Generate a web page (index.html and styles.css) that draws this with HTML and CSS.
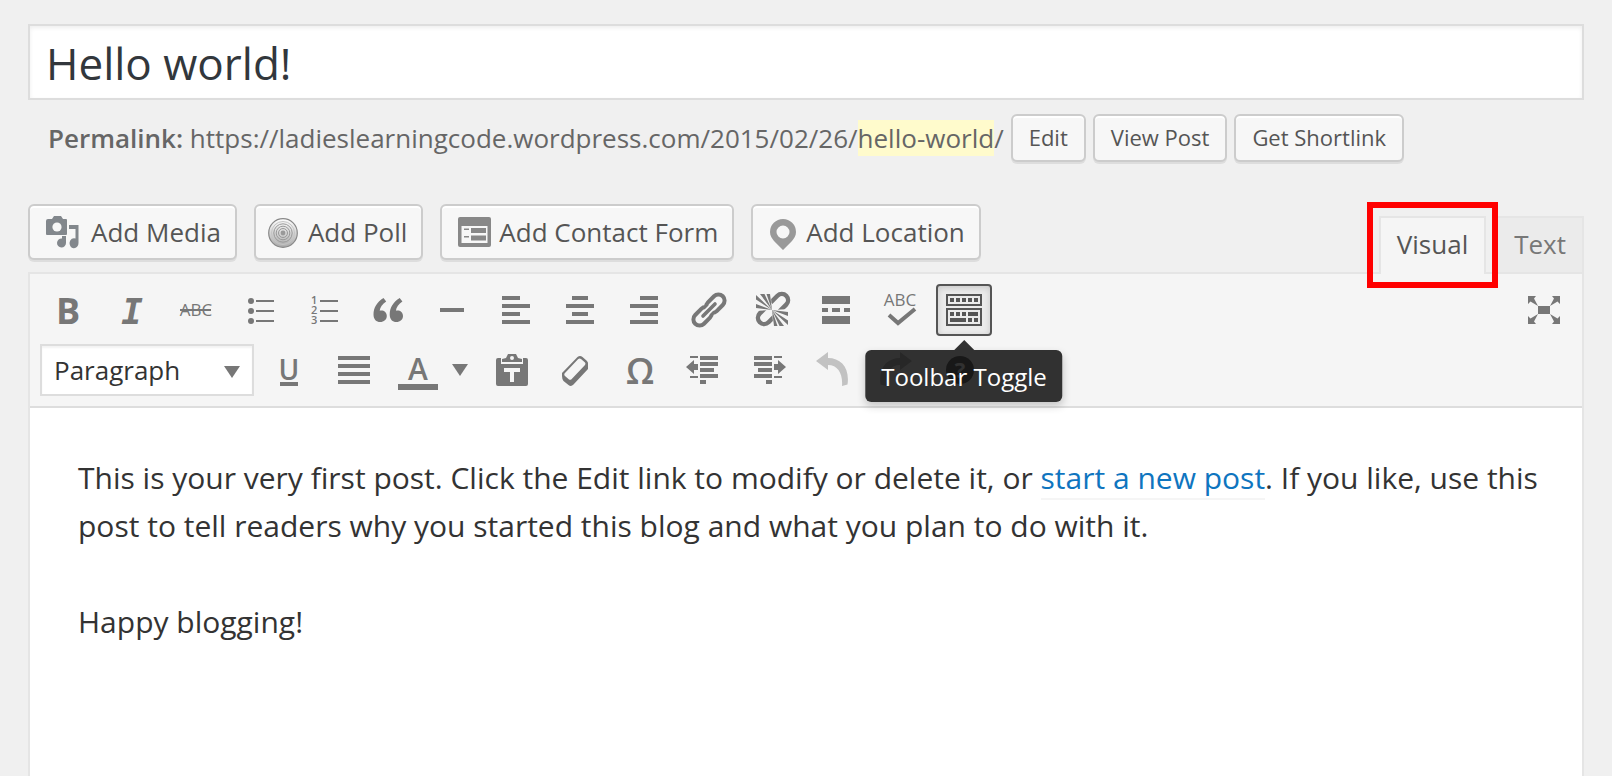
FILE: index.html
```html
<!DOCTYPE html>
<html lang="en">
<head>
<meta charset="utf-8">
<title>Edit Post</title>
<link rel="stylesheet" href="styles.css">
</head>
<body>
<main class="page">
  <input class="title" type="text" aria-label="Post title" value="Hello world!">

  <div class="permalink">
    <span class="permalink-text"><strong>Permalink:</strong> https://ladieslearningcode.wordpress.com/2015/02/26/<mark class="slug">hello-world</mark>/</span>
    <button class="button small" type="button">Edit</button>
    <button class="button small" type="button">View Post</button>
    <button class="button small" type="button">Get Shortlink</button>
  </div>

  <div class="tools">
    <div class="media">
      <button class="button" type="button">
        <svg width="49" height="36" viewBox="0 0 49 36" aria-hidden="true"><g fill="#82878c"><path d="M6 5h4l2-3h7l2 3h3q1 0 1 1v14q0 1-1 1H5q-1 0-1-1V7q0-2 2-2z"/><path d="M27 11h9.500v18a4.500 5 0 1 1-3-4.500V15H27z"/><path d="M20 22h4v7a4.500 4.500 0 1 1-4-4.500z"/></g><circle cx="15" cy="13" r="4.600" fill="#f7f7f7"/></svg>Add Media</button>
      <button class="button" type="button">
        <svg width="40" height="36" viewBox="0 0 40 36" aria-hidden="true"><defs><linearGradient id="disc" x1="0" y1="0" x2="0" y2="1"><stop offset="0" stop-color="#fff"/><stop offset="1" stop-color="#aaa"/></linearGradient></defs><circle cx="15" cy="19" r="14.300" fill="url(#disc)" stroke="#888" stroke-width="1.200"/><g fill="none" stroke="#999"><circle cx="15" cy="19" r="11.500" stroke="#c4c4c4"/><circle cx="15" cy="19" r="9.200"/><circle cx="15" cy="19" r="6.800"/><circle cx="15" cy="19" r="4.500"/></g><circle cx="15" cy="19" r="2.400" fill="#999"/></svg>Add Poll</button>
      <button class="button" type="button">
        <svg width="45" height="36" viewBox="0 0 45 36" aria-hidden="true"><rect x="4" y="3" width="33" height="30" rx="2" fill="#888"/><path fill="#f7f7f7" d="M7.500 12h26v17h-26z"/><g fill="#888"><path d="M17 14h15v5H17zM17 21.500h15v5H17zM10 14.500h5v1.500h-5zM10 22h5v1.500h-5z"/></g></svg>Add Contact Form</button>
      <button class="button" type="button">
        <svg width="41" height="36" viewBox="0 0 41 36" aria-hidden="true"><path fill="#999" fill-rule="evenodd" d="M18 5a13 13 0 0 1 13 13c0 4-2 6.500-4 9l-9 9-9-9c-2-2.500-4-5-4-9A13 13 0 0 1 18 5zm0 6.500a6.500 6.500 0 1 0 0 13 6.500 6.500 0 0 0 0-13z"/></svg>Add Location</button>
    </div>
    <div class="tabs">
      <div class="tab-wrap"><button class="tab active" type="button">Visual</button><span class="highlight"></span></div>
      <button class="tab" type="button">Text</button>
    </div>
  </div>

  <section class="editor">
    <div class="toolbar">
      <div class="row">
        <button class="tool" type="button" aria-label="Bold"><svg viewBox="0 0 40 40"><text class="b" x="20" y="34" text-anchor="middle" font-size="36">B</text></svg></button>
        <button class="tool" type="button" aria-label="Italic"><svg viewBox="0 0 40 40"><text class="i" x="20" y="34" text-anchor="middle" font-size="36">I</text></svg></button>
        <button class="tool" type="button" aria-label="Strikethrough"><svg viewBox="0 0 40 40"><text x="20" y="26" text-anchor="middle" font-size="17">ABC</text><path d="M4 19h31v2H4z"/></svg></button>
        <button class="tool" type="button" aria-label="Bulleted list"><svg viewBox="0 0 40 40"><circle cx="11" cy="11" r="3"/><circle cx="11" cy="21" r="3"/><circle cx="11" cy="31" r="3"/><path d="M16 10h18v2H16zM16 20h18v2H16zM16 30h18v2H16z"/></svg></button>
        <button class="tool" type="button" aria-label="Numbered list"><svg viewBox="0 0 40 40"><g class="s" font-size="11"><text x="7" y="14">1</text><text x="7" y="24">2</text><text x="7" y="34">3</text></g><path d="M16 10h18v2H16zM16 20h18v2H16zM16 30h18v2H16z"/></svg></button>
        <button class="tool" type="button" aria-label="Blockquote"><svg viewBox="0 0 40 40"><path d="M15.500 8C9 12 5.500 17.500 5.500 24.500c0 5 3 7.500 6.700 7.500s6.600-2.500 6.600-6-2.500-5.500-5.500-5.500c-.8 0-1.300.1-1.600.2.300-3.500 2.800-6.500 6.500-9.200z"/><path transform="translate(16.200)" d="M15.500 8C9 12 5.500 17.500 5.500 24.500c0 5 3 7.500 6.700 7.500s6.600-2.500 6.600-6-2.500-5.500-5.500-5.500c-.8 0-1.300.1-1.600.2.300-3.500 2.800-6.500 6.500-9.200z"/></svg></button>
        <button class="tool" type="button" aria-label="Horizontal line"><svg viewBox="0 0 40 40"><path d="M8 18h24v4H8z"/></svg></button>
        <button class="tool" type="button" aria-label="Align left"><svg viewBox="0 0 40 40"><path d="M6 6h18v4H6zM6 14h28v4H6zM6 22h18v4H6zM6 30h28v4H6z"/></svg></button>
        <button class="tool" type="button" aria-label="Align center"><svg viewBox="0 0 40 40"><path d="M12 6h16v4H12zM6 14h28v4H6zM12 22h16v4H12zM6 30h28v4H6z"/></svg></button>
        <button class="tool" type="button" aria-label="Align right"><svg viewBox="0 0 40 40"><path d="M16 6h18v4H16zM6 14h28v4H6zM16 22h18v4H16zM6 30h28v4H6z"/></svg></button>
        <button class="tool" type="button" aria-label="Insert link"><svg viewBox="0 0 40 40"><g transform="translate(21 20) rotate(-45)" fill="none" stroke="#777" stroke-width="4"><rect x="-19.500" y="-6.200" width="21" height="12.400" rx="6.200"/><rect x="-1.500" y="-6.200" width="21" height="12.400" rx="6.200"/><path stroke="#f5f5f5" stroke-width="7" stroke-linecap="round" d="M-8.500 0h17"/><path stroke-linecap="round" stroke-width="3.600" d="M-8.500 0h17"/></g></svg></button>
        <button class="tool" type="button" aria-label="Remove link"><svg viewBox="0 0 40 40"><g transform="translate(21 19) rotate(-45)" fill="none" stroke="#777" stroke-width="4.500"><path d="M-3-6.200h-9.500a6.200 6.200 0 0 0 0 12.400H-3M3-6.200h9.500a6.200 6.200 0 0 1 0 12.400H3"/></g><path fill="#f5f5f5" d="M20 20 2 21V2h16.500zM20 20l18-1v19H21.500z"/><path d="M20 20 4 18v-4zM20 20 4 9.500V5zM20 20 8 4h4.500zM20 20 14.500 4H18zM20 20l16 2v4zM20 20l16 10.500V35zM20 20l12 16h-4.500zM20 20l5.500 16H22z"/></svg></button>
        <button class="tool" type="button" aria-label="Read more tag"><svg viewBox="0 0 40 40"><path d="M6 6h28v8H6zM6 18h6v4H6zM16 18h8v4h-8zM28 18h6v4h-6zM6 26h28v8H6z"/></svg></button>
        <button class="tool" type="button" aria-label="Proofread"><svg viewBox="0 0 40 40"><text x="20" y="16" text-anchor="middle" font-size="17">ABC</text><path fill="none" stroke="#777" stroke-width="4" d="m9 25 9 8 17-14"/></svg></button>
        <div class="toggle-wrap">
          <button class="tool pressed" type="button" aria-label="Toolbar Toggle" aria-describedby="tip"><svg viewBox="0 0 40 40"><path fill="none" stroke="#555" stroke-width="2" d="M3 5h34v10H3zM3 19h34v16H3z"/><path fill="#555" d="M6 8h4v4H6zM12 8h4v4h-4zM18 8h4v4h-4zM24 8h4v4h-4zM30 8h4v4h-4zM6 22h4v4H6zM12 22h4v4h-4zM18 22h4v4h-4zM24 22h10v4H24zM6 28h16v4H6zM24 28h4v4h-4zM30 28h4v4h-4z"/></svg></button>
          <div class="tooltip" id="tip" role="tooltip">Toolbar Toggle</div>
        </div>
        <button class="tool last" type="button" aria-label="Distraction-free writing"><svg viewBox="0 0 40 40"><path d="M14 16h12v8H14zM4 6h8l-2 2.500L14 16 6.500 11.500 4 14zM36 6v8l-2.500-2.500L26 16l4-7.500L28 6zM4 34v-8l2.500 2.500L14 24l-4 7.500 2 2.500zM36 34h-8l2-2.500-4-7.500 7.500 4.500L36 26z"/></svg></button>
      </div>
      <div class="row">
        <div class="format">
          <select class="select" aria-label="Paragraph format"><option>Paragraph</option><option>Heading 1</option><option>Heading 2</option></select>
          <svg class="select-arrow" viewBox="0 0 16 12" aria-hidden="true"><path d="M0 0h16L8 12z"/></svg>
        </div>
        <button class="tool" type="button" aria-label="Underline"><svg viewBox="0 0 40 40"><text class="s" x="19" y="30" text-anchor="middle" font-size="28">U</text><path d="M10 32h18v4H10z"/></svg></button>
        <button class="tool" type="button" aria-label="Justify"><svg viewBox="0 0 40 40"><path d="M4 6h32v4H4zM4 14h32v4H4zM4 22h32v4H4zM4 30h32v4H4z"/></svg></button>
        <div class="split">
          <button class="tool" type="button" aria-label="Text color"><svg viewBox="0 0 40 40"><text class="s" x="20" y="30" text-anchor="middle" font-size="30">A</text><path d="M0 34h40v6H0z"/></svg></button>
          <button class="tool narrow" type="button" aria-label="Choose text color"><svg viewBox="0 0 16 12"><path d="M0 0h16L8 12z"/></svg></button>
        </div>
        <button class="tool" type="button" aria-label="Paste as text"><svg viewBox="0 0 40 40"><path d="M6 8h3v6h22V8h3q2 0 2 2v24q0 2-2 2H6q-2 0-2-2V10q0-2 2-2z"/><path fill-rule="evenodd" d="M16 4h8l2 4 4 1v3H10V9l4-1zm4 2a2 2 0 1 0 0 4 2 2 0 0 0 0-4z"/><path fill="#f5f5f5" d="M12 18h16v4h-6v10h-4V22h-6z"/></svg></button>
        <button class="tool" type="button" aria-label="Clear formatting"><svg viewBox="0 0 40 40"><path fill-rule="evenodd" d="M21.500 7q2.500-2 5 0l4.500 4q1.500 1.500 1 4v4L17.500 34.500q-2.500 2.500-5 .5L7.500 31Q6 29 6 26v-3zM22 9.200 8.500 23.500q-.8 1.500.5 2.500l4 3.500q1.200.8 2.500-.3L29 15q1-1.500 0-2.600L25 9q-1.500-1-3 .2z"/></svg></button>
        <button class="tool" type="button" aria-label="Special character"><svg viewBox="0 0 40 40"><text class="s" x="20" y="34" text-anchor="middle" font-size="36">Ω</text></svg></button>
        <button class="tool" type="button" aria-label="Decrease indent"><svg viewBox="0 0 40 40"><path d="M16 6h18v4H16zM16 12h18v4H16zM16 18h14v4H16zM16 24h18v4H16zM16 30h6v4h-6zM6 6h8v2H6zM6 26h8v2H6zM2 17l8-7v4h4v6h-4v4z"/></svg></button>
        <button class="tool" type="button" aria-label="Increase indent"><svg viewBox="0 0 40 40"><path d="M6 6h18v4H6zM6 12h18v4H6zM10 18h14v4H10zM6 24h18v4H6zM18 30h6v4h-6zM26 6h8v2h-8zM26 26h8v2h-8zM38 17l-8-7v4h-4v6h4v4z"/></svg></button>
        <button class="tool faded" type="button" aria-label="Undo" disabled><svg viewBox="0 0 40 40"><path d="M4 11 16 2v6c13 0 22 10 19.500 26.500L30 36c1-12-4-21-14-21v5z"/></svg></button>
        <button class="tool faded" type="button" aria-label="Redo" disabled><svg viewBox="0 0 40 40"><path d="M36 11 24 2v6C11 8 2 18 4.500 34.500L10 36C9 24 14 15 24 15v5z"/></svg></button>
        <button class="tool" type="button" aria-label="Keyboard shortcuts"><svg viewBox="0 0 40 40"><circle cx="20" cy="20" r="14"/><text class="b knockout" x="20" y="28" text-anchor="middle" font-size="22">?</text></svg></button>
      </div>
    </div>
    <article class="content">
      <p>This is your very first post. Click the Edit link to modify or delete it, or <a href="#new">start a new post</a>. If you like, use this post to tell readers why you started this blog and what you plan to do with it.</p>
      <p>Happy blogging!</p>
    </article>
  </section>
</main>
</body>
</html>
```

FILE: styles.css
```css
* { box-sizing: border-box; }

body {
  margin: 0;
  background: #f0f0f0;
  color: #555;
  font: 26px/36px "Open Sans", sans-serif;
}

button, input, select { font: inherit; color: inherit; margin: 0; }

.page {
  display: flex;
  flex-direction: column;
  min-height: 100vh;
  padding: 24px 28px 0;
}

.title {
  width: 100%;
  height: 76px;
  padding: 2px 16px 0;
  border: 2px solid #ddd;
  background: #fff;
  box-shadow: inset 0 2px 4px rgba(0, 0, 0, .07);
  color: #32373c;
  font-size: 44px;
}

.permalink {
  display: flex;
  align-items: center;
  gap: 7px;
  margin-top: 14px;
  padding-left: 20px;
  color: #666;
}

.permalink strong { font-weight: 600; }
.slug { background: #fffbcc; color: inherit; }

.button {
  display: flex;
  align-items: center;
  height: 56px;
  padding: 0 14px 0 12px;
  border: 2px solid #ccc;
  border-radius: 6px;
  background: #f7f7f7;
  box-shadow: inset 0 2px 0 #fff, 0 2px 0 rgba(0, 0, 0, .08);
  color: #555;
  white-space: nowrap;
}

.button.small {
  height: 48px;
  padding: 0 16px 2px;
  font-size: 22px;
}

.tools {
  display: flex;
  justify-content: space-between;
  align-items: flex-start;
  margin-top: 42px;
}

.media { display: flex; gap: 17px; }

.tabs {
  display: flex;
  gap: 10px;
  margin-top: 12px;
}

.tab-wrap { position: relative; margin-bottom: -2px; z-index: 1; }

.tab {
  display: block;
  height: 56px;
  padding: 0 16px 2px;
  border: 2px solid #e5e5e5;
  border-bottom: 0;
  background: #ebebeb;
  color: #777;
}

.tab.active {
  height: 58px;
  padding-bottom: 4px;
  background: #f5f5f5;
  color: #555;
}

.highlight {
  position: absolute;
  inset: -14px -12px;
  border: 6px solid #f00;
  pointer-events: none;
}

.editor {
  flex: 1;
  display: flex;
  flex-direction: column;
  border: 2px solid #e5e5e5;
  border-bottom: 0;
  background: #fff;
}

.toolbar {
  display: flex;
  flex-direction: column;
  gap: 8px;
  padding: 10px;
  border-bottom: 2px solid #ddd;
  background: #f5f5f5;
}

.row { display: flex; gap: 8px; }

.tool {
  display: flex;
  align-items: center;
  justify-content: center;
  width: 56px;
  height: 52px;
  padding: 0;
  border: 2px solid transparent;
  border-radius: 4px;
  background: none;
}

.tool svg { width: 40px; height: 40px; fill: #777; overflow: visible; }
.tool text { fill: #777; font-family: "Open Sans", sans-serif; }
.tool .b { font-weight: 700; }
.tool .s { font-weight: 600; }
.tool .i { font-family: "DejaVu Sans Mono", monospace; font-weight: 700; font-style: italic; }
.tool .knockout { fill: #f5f5f5; }
.tool.faded { opacity: .4; }
.tool.last { margin-left: auto; }
.tool.narrow { width: 28px; }
.tool.narrow svg { width: 16px; height: 12px; }

.tool.pressed {
  border-color: #555;
  background: #ebebeb;
  box-shadow: inset 0 2px 6px rgba(0, 0, 0, .15);
}

.split { display: flex; width: 86px; }

.toggle-wrap { position: relative; }

.tooltip {
  position: absolute;
  top: 66px;
  left: 50%;
  transform: translateX(-50%);
  z-index: 2;
  padding: 9px 16px 7px;
  border-radius: 6px;
  background: rgba(0, 0, 0, .8);
  box-shadow: 0 4px 8px rgba(0, 0, 0, .2);
  color: #fff;
  font-size: 24px;
  white-space: nowrap;
}

.tooltip::before {
  content: "";
  position: absolute;
  bottom: 100%;
  left: 50%;
  margin-left: -10px;
  border: 10px solid transparent;
  border-top: 0;
  border-bottom-color: rgba(0, 0, 0, .8);
}

.format { position: relative; width: 214px; }

.select {
  width: 100%;
  height: 52px;
  padding: 0 12px;
  border: 2px solid #ddd;
  border-radius: 0;
  background: #fff;
  box-shadow: inset 0 2px 2px rgba(0, 0, 0, .05);
  color: #333;
  appearance: none;
}

.select-arrow {
  position: absolute;
  top: 22px;
  right: 14px;
  width: 16px;
  height: 12px;
  fill: #777;
  pointer-events: none;
}

.content {
  padding: 46px 36px 48px 48px;
  color: #333;
  font: 30px/48px "Open Sans", sans-serif;
}

.content p { margin: 0 0 48px; }

.content a {
  border-bottom: 2px solid #f5f5f5;
  color: #0f75bf;
  text-decoration: none;
}
```
